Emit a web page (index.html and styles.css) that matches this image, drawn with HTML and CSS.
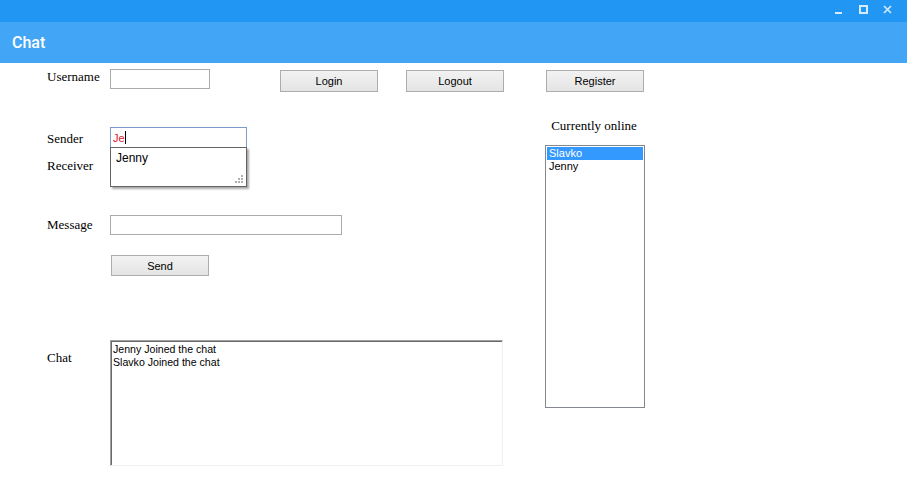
FILE: index.html
```html
<!DOCTYPE html>
<html>
<head>
<meta charset="utf-8">
<link rel="stylesheet" href="styles.css">
</head>
<body>
<div class="titlebar">
  <svg class="ctl" width="10" height="10" viewBox="0 0 10 10"><rect x="0" y="7" width="7" height="2" fill="#d6ebfd"/></svg>
  <svg class="ctl" width="10" height="10" viewBox="0 0 10 10"><rect x="1" y="1" width="7" height="7" fill="none" stroke="#d6ebfd" stroke-width="2"/></svg>
  <svg class="ctl" width="10" height="10" viewBox="0 0 10 10"><path d="M1 1 L8 8 M8 1 L1 8" stroke="#d6ebfd" stroke-width="1.6"/></svg>
</div>
<div class="header">Chat</div>
<div class="content">
  <div class="toprow">
    <span class="lbl">Username</span>
    <div class="input w-user"></div>
    <button class="btn b-login">Login</button>
    <button class="btn b-logout">Logout</button>
    <button class="btn b-register">Register</button>
  </div>
  <div class="lower">
    <div class="form">
      <div class="row r-sender">
        <span class="lbl l-sender">Sender</span>
        <div class="field">
          <div class="input w-sender focused"><span class="typed">Je</span><span class="caret"></span></div>
          <div class="dropdown">
            <div class="opt">Jenny</div>
            <svg class="grip" width="9" height="9" viewBox="0 0 9 9">
              <g fill="#b0b0b0">
                <rect x="6" y="0" width="2" height="2"/>
                <rect x="3" y="3" width="2" height="2"/><rect x="6" y="3" width="2" height="2"/>
                <rect x="0" y="6" width="2" height="2"/><rect x="3" y="6" width="2" height="2"/><rect x="6" y="6" width="2" height="2"/>
              </g>
            </svg>
          </div>
        </div>
      </div>
      <div class="row r-receiver">
        <span class="lbl l-receiver">Receiver</span>
      </div>
      <div class="row r-message">
        <span class="lbl l-message">Message</span>
        <div class="input w-message"></div>
      </div>
      <div class="row r-send">
        <button class="btn b-send">Send</button>
      </div>
      <div class="row r-chat">
        <span class="lbl l-chat">Chat</span>
        <div class="chatbox">
          <div>Jenny Joined the chat</div>
          <div>Slavko Joined the chat</div>
        </div>
      </div>
    </div>
    <div class="online">
      <div class="online-title">Currently online</div>
      <div class="listbox">
        <div class="item sel">Slavko</div>
        <div class="item">Jenny</div>
      </div>
    </div>
  </div>
</div>
</body>
</html>
```
FILE: styles.css
```css
* { box-sizing: border-box; }
html, body { margin: 0; padding: 0; background: #fff; }
body { width: 907px; height: 503px; overflow: hidden; font-family: "Liberation Sans", Arial, sans-serif; }

.titlebar {
  height: 22px;
  background: #2196F3;
  display: flex;
  justify-content: flex-end;
  align-items: flex-start;
  padding: 5px 14px 0 0;
  gap: 14px;
}
.ctl { display: block; }

.header {
  height: 41px;
  background: #42A5F5;
  color: #fff;
  font-family: Roboto, "Liberation Sans", sans-serif;
  font-size: 16px;
  font-weight: 500;
  display: flex;
  align-items: center;
  padding-left: 12px;
}

.content { padding-left: 47px; }

.lbl {
  font-family: "Liberation Serif", "Times New Roman", serif;
  font-size: 13px;
  line-height: 15px;
  color: #000;
  width: 63px;
  flex: none;
}

.input {
  height: 20px;
  border: 1px solid #ababab;
  background: #fff;
  flex: none;
}

.btn {
  font-family: "Liberation Sans", Arial, sans-serif;
  font-size: 11px;
  color: #000;
  width: 98px;
  height: 22px;
  border: 1px solid #adadad;
  background: linear-gradient(#f2f2f2, #e4e4e4);
  padding: 0;
  margin: 0;
  flex: none;
}

.toprow {
  display: flex;
  align-items: flex-start;
  margin-top: 6px;
  height: 22px;
}
.w-user { width: 100px; }
.b-login { margin-left: 70px; margin-top: 1px; }
.b-logout { margin-left: 28px; margin-top: 1px; }
.b-register { margin-left: 42px; margin-top: 1px; }

.lower { display: flex; align-items: flex-start; }
.form { width: 456px; display: flex; flex-direction: column; }
.row { display: flex; align-items: flex-start; }

.r-sender { margin-top: 36px; height: 21px; }
.l-sender { padding-top: 4px; }
.field { position: relative; width: 137px; height: 21px; }
.w-sender {
  width: 137px;
  height: 21px;
  border-color: #7a9cc6;
  display: flex;
  align-items: center;
  padding-left: 2px;
  font-size: 11px;
}
.typed { color: #e0102a; }
.caret { display: inline-block; width: 1px; height: 13px; background: #000; }

.dropdown {
  position: absolute;
  left: 0;
  top: 20px;
  width: 137px;
  height: 40px;
  background: #fff;
  border: 1px solid #646464;
  box-shadow: 2px 2px 2px rgba(0,0,0,0.35);
  z-index: 2;
}
.opt {
  font-size: 12px;
  color: #000;
  padding: 3px 0 0 5px;
  line-height: 14px;
}
.grip { position: absolute; right: 2px; bottom: 2px; }

.r-receiver { margin-top: 7px; height: 20px; }
.l-receiver { padding-top: 3px; }

.r-message { margin-top: 40px; height: 20px; }
.l-message { padding-top: 2px; }
.w-message { width: 232px; }

.r-send { margin-top: 20px; padding-left: 64px; }
.b-send { height: 21px; }

.r-chat { margin-top: 64px; }
.l-chat { padding-top: 10px; }
.chatbox {
  width: 394px;
  height: 126px;
  border-top: 1px solid #a0a0a0;
  border-left: 1px solid #a0a0a0;
  border-right: 1px solid #f0f0f0;
  border-bottom: 1px solid #f0f0f0;
  box-shadow: inset 1px 1px 0 #696969;
  font-size: 10.6px;
  line-height: 13px;
  color: #000;
  padding: 2px 0 0 2px;
}

.online { margin-left: 42px; width: 100px; }
.online-title {
  font-family: "Liberation Serif", "Times New Roman", serif;
  font-size: 13px;
  line-height: 15px;
  text-align: center;
  margin-top: 27px;
  margin-left: -2px;
  white-space: nowrap;
}
.listbox {
  margin-top: 12px;
  height: 263px;
  border: 1px solid #828790;
  padding: 1px;
  font-size: 11px;
}
.item { height: 13px; line-height: 13px; padding-left: 2px; color: #000; }
.item.sel { background: #3399ff; color: #fff; }
```
